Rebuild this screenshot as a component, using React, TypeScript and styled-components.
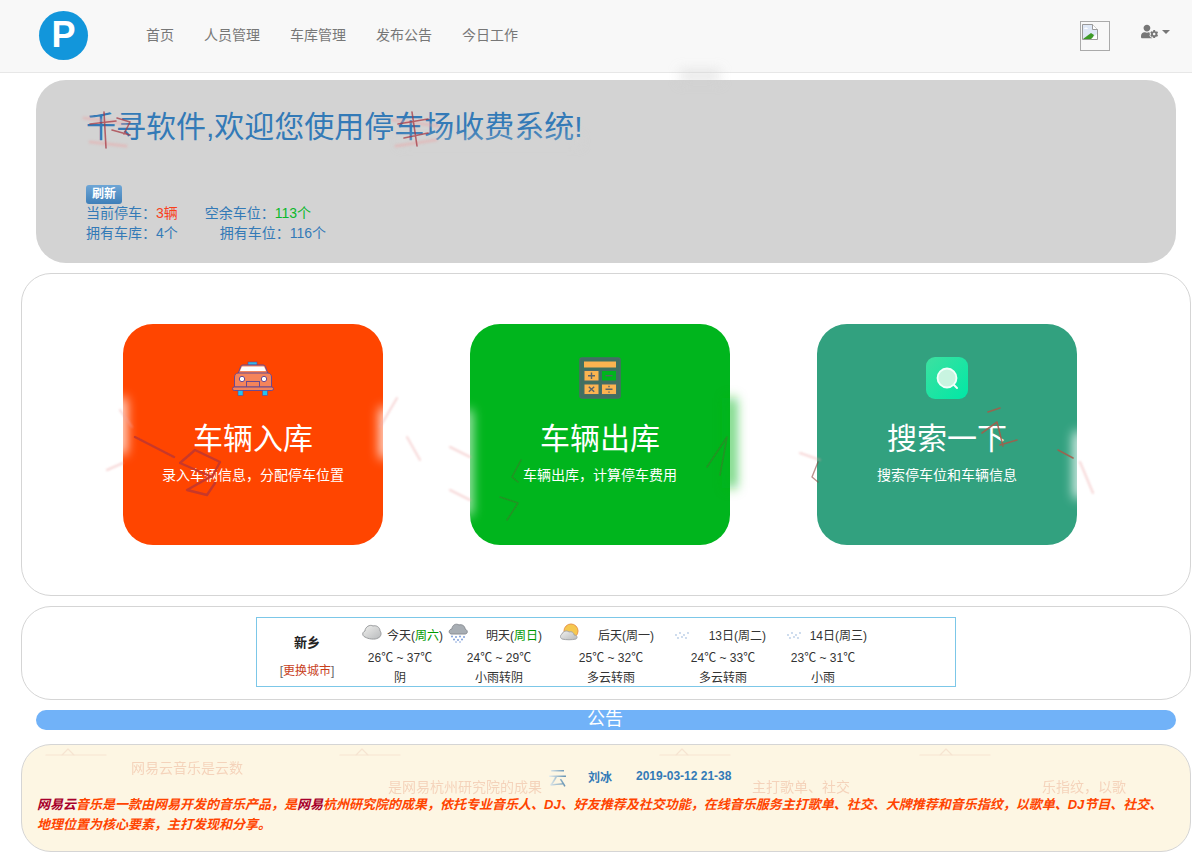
import styled, { createGlobalStyle } from "styled-components";
import { FaUserCog } from "react-icons/fa";

const GlobalStyle = createGlobalStyle`
  * { box-sizing: border-box; }
  html, body { margin: 0; padding: 0; background: #fff; }
  body {
    font-family: "Liberation Sans", "Noto Sans CJK SC", sans-serif;
    font-size: 14px;
    color: #333;
  }
`;

const Page = styled.div`
  position: relative;
  width: 1192px;
  height: 856px;
  overflow: hidden;
`;

const Navbar = styled.nav`
  display: flex;
  align-items: center;
  height: 73px;
  padding-left: 39px;
  background: #f8f8f8;
  border-bottom: 1px solid #e7e7e7;
`;

const Logo = styled.div`
  display: flex;
  align-items: center;
  justify-content: center;
  width: 49px;
  height: 49px;
  margin-top: -2px;
  border-radius: 50%;
  background: #1296db;
  color: #fff;
  font-size: 36px;
  font-weight: 700;
`;

const Menu = styled.div`
  display: flex;
  gap: 30px;
  margin-left: 58px;
  margin-top: -3px;
`;

const MenuLink = styled.a`
  color: #777;
  font-size: 14px;
  line-height: 20px;
`;

const NavRight = styled.div`
  display: flex;
  align-items: flex-start;
  margin-left: auto;
  padding-right: 22px;
`;

const BrokenImage = styled.div`
  width: 30px;
  height: 30px;
  padding: 2px 1px;
  border: 1px solid #aaa;
`;

const UserMenu = styled.div`
  display: flex;
  align-items: flex-start;
  margin-left: 31px;
  margin-top: 2px;
  color: #777;
  font-size: 17px;
`;

const Caret = styled.span`
  margin: 7px 0 0 4px;
  border-top: 4px solid #777;
  border-left: 4px solid transparent;
  border-right: 4px solid transparent;
`;

const Jumbotron = styled.section`
  height: 183px;
  margin: 7px 16px 0 36px;
  padding: 30px 50px 0;
  border-radius: 30px;
  background: #d3d3d3;
  color: #337ab7;
`;

const Title = styled.h1`
  margin: 0 0 42px;
  font-size: 30px;
  font-weight: 400;
  line-height: 33px;
  white-space: nowrap;
`;

const Badge = styled.span`
  display: block;
  width: 36px;
  height: 19px;
  margin-bottom: -1px;
  border-radius: 3px;
  background: linear-gradient(#6ea6d6, #3f7fb8);
  color: #fff;
  font-size: 12px;
  font-weight: 700;
  line-height: 19px;
  text-align: center;
`;

const StatRow = styled.div`
  display: flex;
  height: 20px;
  line-height: 20px;
`;

const Stat = styled.span<{ $offset?: number }>`
  margin-left: ${(p) => p.$offset ?? 0}px;
`;

const Value = styled.span<{ $color?: string }>`
  color: ${(p) => p.$color ?? "inherit"};
`;

const Panel = styled.section<{ $height: number; $top?: number; $bg?: string }>`
  position: relative;
  height: ${(p) => p.$height}px;
  margin: ${(p) => p.$top ?? 10}px 1px 0 21px;
  border: 1px solid #d5d5d5;
  border-radius: 30px;
  background: ${(p) => p.$bg ?? "#fff"};
`;

const CardGrid = styled.div`
  display: grid;
  grid-template-columns: repeat(3, 347px);
  padding: 50px 0 0 101px;
`;

const ActionCard = styled.a<{ $bg: string }>`
  display: flex;
  flex-direction: column;
  align-items: center;
  width: 260px;
  height: 221px;
  padding-top: 33px;
  border-radius: 30px;
  background: ${(p) => p.$bg};
  color: #fff;
`;

const CardIcon = styled.div`
  width: 42px;
  height: 42px;
`;

const CardTitle = styled.div`
  margin-top: 20px;
  font-size: 30px;
  line-height: 40px;
`;

const CardText = styled.div`
  margin-top: 6px;
  font-size: 14px;
  line-height: 20px;
`;

const WeatherBox = styled.div`
  display: grid;
  grid-template-columns: 100px 86px 112px 112px 112px 88px;
  width: 700px;
  height: 70px;
  margin: 10px 0 0 234px;
  border: 1px solid #7cc7e8;
  font-size: 12px;
  color: #333;
  white-space: nowrap;
`;

const CityCell = styled.div`
  display: flex;
  flex-direction: column;
  align-items: center;
  padding-top: 15px;
`;

const CityName = styled.strong`
  font-size: 13px;
  line-height: 20px;
  color: #222;
`;

const CityLink = styled.span`
  margin-top: 8px;
  line-height: 20px;
  color: #666;
`;

const CityLinkText = styled.span`
  color: #c8401c;
`;

const DayCell = styled.div`
  display: flex;
  flex-direction: column;
  align-items: center;
  padding-top: 6px;
`;

const DayHead = styled.div<{ $wide?: boolean }>`
  display: flex;
  justify-content: space-between;
  align-items: flex-start;
  align-self: stretch;
  height: 24px;
  padding: 0 ${(p) => (p.$wide ? 13 : 0)}px 0 5px;
  line-height: 24px;
`;

const WeatherIcon = styled.svg`
  width: 20px;
  height: 20px;
  margin-top: -1px;
`;

const Weekday = styled.span`
  color: #090;
`;

const DayLine = styled.div`
  height: 20px;
  line-height: 20px;
`;

const NoticeBar = styled.div`
  height: 20px;
  margin: 10px 16px 0 36px;
  padding-right: 2px;
  border-radius: 10px;
  background: #71b2f8;
  color: #fff;
  font-size: 18px;
  line-height: 18px;
  text-align: center;
`;

const NoticeHead = styled.div`
  display: flex;
  align-items: center;
  height: 20px;
  margin: 21px 0 0 526px;
  color: #337ab7;
  font-size: 12px;
  font-weight: 700;
`;

const NoticeGhostTitle = styled.span`
  width: 40px;
  font-size: 19px;
  font-weight: 400;
  background: linear-gradient(90deg, #eef2f0, #5f8fb0 45%);
  -webkit-background-clip: text;
  background-clip: text;
  color: transparent;
`;

const NoticeDate = styled.span`
  margin-left: 24px;
`;

const NoticeBody = styled.p`
  margin: 9px 0 0 15px;
  color: #f40;
  font-size: 13px;
  font-style: italic;
  font-weight: 700;
  line-height: 20px;
  white-space: nowrap;
`;

const BodyMark = styled.span`
  color: #a8002c;
`;

const GhostText = styled.span<{ $x: number; $y: number }>`
  position: absolute;
  left: ${(p) => p.$x}px;
  top: ${(p) => p.$y}px;
  color: #e9a080;
  opacity: 0.4;
  font-size: 14px;
  line-height: 16px;
  white-space: nowrap;
`;

const Smears = styled.svg`
  position: absolute;
  left: 0;
  top: 0;
  pointer-events: none;
`;

const days = [
  { label: "今天", week: "周六", temp: "26℃ ~ 37℃", text: "阴", kind: "cloud" },
  { label: "明天", week: "周日", temp: "24℃ ~ 29℃", text: "小雨转阴", kind: "rain", wide: true },
  { label: "后天", week: "周一", temp: "25℃ ~ 32℃", text: "多云转雨", kind: "sun", wide: true, plain: true },
  { label: "13日", week: "周二", temp: "24℃ ~ 33℃", text: "多云转雨", kind: "snow", wide: true, plain: true },
  { label: "14日", week: "周三", temp: "23℃ ~ 31℃", text: "小雨", kind: "snow", plain: true },
];

function WeatherGlyph({ kind }: { kind: string }) {
  return (
    <WeatherIcon viewBox="0 0 20 20">
      <defs>
        <linearGradient id="cloudFill" x1="0" y1="0" x2="1" y2="1">
          <stop offset="0" stopColor="#f0f0ee" />
          <stop offset="1" stopColor="#b8babc" />
        </linearGradient>
      </defs>
      {kind === "sun" && <circle cx="11" cy="8" r="7" fill="#f5c850" stroke="#e8964a" />}
      {kind === "cloud" && (
        <path d="M3 14C0 13 0 9 3 8 3 4 8 1 11 3c3-1 7 1 7 5 2 2 1 6-2 7-3 2-10 1-13-1z" fill="url(#cloudFill)" stroke="#9a9c9e" />
      )}
      {kind === "rain" && (
        <>
          <path d="M3 11C0 10 1 6 4 6 4 2 8 0 11 2c3-1 6 1 6 4 3 1 3 5 0 5z" fill="#a8aeb4" stroke="#8a8e94" />
          <g fill="#7f9fd8">
            <circle cx="4" cy="13.500" r="1" />
            <circle cx="8" cy="14" r="1" />
            <circle cx="12" cy="13.500" r="1" />
            <circle cx="16" cy="14" r="1" />
            <circle cx="6" cy="16.500" r="1" />
            <circle cx="10" cy="17" r="1" />
            <circle cx="14" cy="16.500" r="1" />
            <circle cx="8" cy="19" r="0.800" />
            <circle cx="12" cy="19" r="0.800" />
          </g>
        </>
      )}
      {kind === "sun" && (
        <path d="M2 16c-2-1-2-4 0-5 1-3 5-4 7-2 3-1 5 1 5 3 3 0 4 3 2 4-4 1-10 1-14 0z" fill="url(#cloudFill)" stroke="#a4a6a8" />
      )}
      {kind === "snow" && (
        <g fill="#b8cce6">
          <circle cx="4" cy="12" r="0.900" />
          <circle cx="8" cy="10" r="0.900" />
          <circle cx="12" cy="12" r="0.900" />
          <circle cx="16" cy="10" r="0.900" />
          <circle cx="6" cy="15" r="0.900" />
          <circle cx="10" cy="14" r="0.900" />
          <circle cx="14" cy="15" r="0.900" />
        </g>
      )}
    </WeatherIcon>
  );
}

function TaxiIcon() {
  return (
    <svg width="42" height="42" viewBox="0 0 42 42">
      <rect x="16" y="5" width="9" height="3" fill="#35b8e8" stroke="#5a4a9a" strokeWidth="0.600" />
      <path d="M6 17l2.500-7c.3-1 1-2 2.500-2h20c1.500 0 2.200 1 2.500 2l2.500 7z" fill="#f5845a" stroke="#6a4a90" />
      <path d="M8 14l1.500-3.500c.3-.7.7-1 1.500-1h20c.8 0 1.200.3 1.500 1L34 14z" fill="#fff" />
      <path d="M2.500 20c0-2 1.500-4 3.500-4h30c2 0 3.500 2 3.500 4v10h-37z" fill="#f5845a" stroke="#6a4a90" />
      <circle cx="10" cy="22" r="2.700" fill="#fff" stroke="#6a4a90" />
      <circle cx="32" cy="22" r="2.700" fill="#fff" stroke="#6a4a90" />
      <rect x="14.500" y="24.500" width="13" height="5.500" fill="#f5845a" stroke="#6a4a90" />
      <rect x="0.500" y="30" width="41" height="3.500" rx="1.700" fill="#f5845a" stroke="#6a4a90" />
      <rect x="6" y="33.500" width="5" height="5" fill="#22c4f0" stroke="#5a4a9a" strokeWidth="0.600" />
      <rect x="30.500" y="33.500" width="5" height="5" fill="#22c4f0" stroke="#5a4a9a" strokeWidth="0.600" />
    </svg>
  );
}

function CalculatorIcon() {
  return (
    <svg width="42" height="42" viewBox="0 0 42 42">
      <rect x="1" y="1" width="40" height="40" rx="2" fill="#3f7060" stroke="#4a6a68" strokeWidth="1.500" />
      <rect x="5" y="4.500" width="32" height="6" fill="#fbb450" />
      <rect x="5" y="13.500" width="15" height="10.500" fill="#fbb450" stroke="#4d6a68" />
      <rect x="22.500" y="13.500" width="15" height="10.500" fill="#00b51d" stroke="#3f7060" />
      <rect x="5" y="27" width="15" height="10.500" fill="#fbb450" stroke="#4d6a68" />
      <rect x="22.500" y="27" width="15" height="10.500" fill="#fbb450" stroke="#4d6a68" />
      <g stroke="#5a6468" strokeWidth="1.400">
        <path d="M9 18.700h7M12.500 15.500v6.500" />
        <path d="M26.500 18.700h7" />
        <path d="M9.800 29.800l5.400 5M15.200 29.800l-5.400 5" />
        <path d="M26.500 32.300h7M30 28.800v1.400M30 34.400v1.400" />
      </g>
    </svg>
  );
}

function SearchIcon() {
  return (
    <svg width="42" height="42" viewBox="0 0 42 42">
      <defs>
        <linearGradient id="searchBg" x1="0" y1="0" x2="1" y2="1">
          <stop offset="0" stopColor="#3ee0a0" />
          <stop offset="1" stopColor="#00e8a6" />
        </linearGradient>
      </defs>
      <rect width="42" height="42" rx="9" fill="url(#searchBg)" />
      <circle cx="21" cy="21" r="9.500" fill="#c8f4e0" stroke="#f2fffa" strokeWidth="1.800" />
      <path d="M28 28l3 3" stroke="#f2fffa" strokeWidth="2" strokeLinecap="round" />
    </svg>
  );
}

function BrokenImageIcon() {
  return (
    <svg width="16" height="16" viewBox="0 0 16 16">
      <path d="M.5.500h10l5 5v10H.5z" fill="#dfe8f6" stroke="#9a9a9a" />
      <path d="M10.500.500v5h5" fill="#fff" stroke="#9a9a9a" />
      <path d="M2 5c1-2 3-2 4 0h-4z" fill="#fff" />
      <path d="M1 15l8-6 3 2-2 4z" fill="#3c9a28" />
      <path d="M9 15l6-5v5z" fill="#fff" />
    </svg>
  );
}

// ghost strokes left on the page by the mouse effect
function PageSmears() {
  return (
    <Smears width="1192" height="856" viewBox="0 0 1192 856">
      <defs>
        <filter id="soft" x="-200%" y="-50%" width="500%" height="200%">
          <feGaussianBlur stdDeviation="6" />
        </filter>
        <filter id="slight" x="-20%" y="-20%" width="140%" height="140%">
          <feGaussianBlur stdDeviation="0.500" />
        </filter>
        <filter id="hazy" x="-20%" y="-20%" width="140%" height="140%">
          <feGaussianBlur stdDeviation="1.200" />
        </filter>
      </defs>

      <g filter="url(#soft)">
        <rect x="116" y="398" width="10" height="56" fill="#fff" />
        <rect x="380" y="408" width="10" height="50" fill="#fff" />
        <rect x="462" y="410" width="10" height="105" fill="#fff" opacity="0.800" />
        <rect x="726" y="398" width="10" height="90" fill="#00b51d" opacity="0.700" />
        <rect x="1074" y="432" width="10" height="66" fill="#fff" />
        <rect x="400" y="138" width="180" height="6" fill="#d3d3d3" opacity="0.600" />
        <rect x="680" y="70" width="40" height="12" fill="#cfcfcf" opacity="0.500" />
      </g>

      <g fill="none" filter="url(#hazy)" strokeLinecap="round" stroke="#eda4a4" opacity="0.450">
        <path d="M84 118l42 6M90 142l36 4M392 120l46 6M396 146l40-6" strokeWidth="3" />
        <path d="M120 410l12 17M107 470l16-7M397 398l-17 29M407 437l13 23M450 447l20 10M450 490l20 10" strokeWidth="2" />
        <path d="M800 453l20 7M1080 462l13 31" strokeWidth="2" />
      </g>

      <g fill="none" filter="url(#slight)" strokeLinecap="round" strokeLinejoin="round">
        <g stroke="#a83a44" strokeWidth="1.600" opacity="0.750">
          <path d="M90 124l26-3M104 112l2 36M117 118l13 4-6 12M112 130l18 5" />
          <path d="M398 124l30-5M412 112l5 34M404 138l24-5" />
        </g>

        <g stroke="#c8392a" strokeWidth="2.400">
          <path d="M135 437l39 20" />
          <path d="M195 450l25 12-8 15-32-14zM210 477l-23 13 20 5 8-12" />
        </g>

        <g stroke="#2c8a26" strokeWidth="1.600" opacity="0.750">
          <path d="M521 460l-9 17 6 5M500 497l18 6-11 17M707 467l20-30-7 38" />
        </g>

        <g stroke="#a85a48" strokeWidth="1.600" opacity="0.850">
          <path d="M988 412l12-4M982 433l15-11M997 422l6 24M1000 445l17-5M1058 450l15 8" />
        </g>

        <g stroke="#8a4a40" strokeWidth="1.400" opacity="0.600">
          <path d="M818 462l-6 15 6 5" />
        </g>

        <g stroke="#e8b8a8" strokeWidth="1.200" opacity="0.300">
          <path d="M46 755h60M62 755l6-6 6 6M340 755h60M356 755l6-6 6 6M660 755h70M676 755l6-6 6 6M920 755h70M940 755l6-6 6 6" />
        </g>
      </g>
    </Smears>
  );
}

export default function App() {
  return (
    <Page>
      <GlobalStyle />
      <Navbar>
        <Logo>P</Logo>
        <Menu>
          <MenuLink>首页</MenuLink>
          <MenuLink>人员管理</MenuLink>
          <MenuLink>车库管理</MenuLink>
          <MenuLink>发布公告</MenuLink>
          <MenuLink>今日工作</MenuLink>
        </Menu>
        <NavRight>
          <BrokenImage>
            <BrokenImageIcon />
          </BrokenImage>
          <UserMenu>
            <FaUserCog />
            <Caret />
          </UserMenu>
        </NavRight>
      </Navbar>

      <Jumbotron>
        <Title>千寻软件,欢迎您使用停车场收费系统!</Title>
        <Badge>刷新</Badge>
        <StatRow>
          <Stat>
            当前停车：<Value $color="#f8401c">3辆</Value>
          </Stat>
          <Stat $offset={27}>
            空余车位：<Value $color="#0cb82c">113个</Value>
          </Stat>
        </StatRow>
        <StatRow>
          <Stat>拥有车库：4个</Stat>
          <Stat $offset={42}>拥有车位：116个</Stat>
        </StatRow>
      </Jumbotron>

      <Panel $height={323}>
        <CardGrid>
          <ActionCard $bg="#ff4500">
            <CardIcon>
              <TaxiIcon />
            </CardIcon>
            <CardTitle>车辆入库</CardTitle>
            <CardText>录入车辆信息，分配停车位置</CardText>
          </ActionCard>
          <ActionCard $bg="#00b51d">
            <CardIcon>
              <CalculatorIcon />
            </CardIcon>
            <CardTitle>车辆出库</CardTitle>
            <CardText>车辆出库，计算停车费用</CardText>
          </ActionCard>
          <ActionCard $bg="#32a17f">
            <CardIcon>
              <SearchIcon />
            </CardIcon>
            <CardTitle>搜索一下</CardTitle>
            <CardText>搜索停车位和车辆信息</CardText>
          </ActionCard>
        </CardGrid>
      </Panel>

      <Panel $height={94}>
        <WeatherBox>
          <CityCell>
            <CityName>新乡</CityName>
            <CityLink>
              [<CityLinkText>更换城市</CityLinkText>]
            </CityLink>
          </CityCell>
          {days.map((day) => (
            <DayCell key={day.label}>
              <DayHead $wide={day.wide}>
                <WeatherGlyph kind={day.kind} />
                <span>
                  {day.label}(
                  {day.plain ? day.week : <Weekday>{day.week}</Weekday>})
                </span>
              </DayHead>
              <DayLine>{day.temp}</DayLine>
              <DayLine>{day.text}</DayLine>
            </DayCell>
          ))}
        </WeatherBox>
      </Panel>

      <NoticeBar>公告</NoticeBar>

      <Panel $height={108} $top={14} $bg="#fdf6e3">
        <GhostText $x={109} $y={15}>网易云音乐是云数</GhostText>
        <GhostText $x={366} $y={34}>是网易杭州研究院的成果</GhostText>
        <GhostText $x={730} $y={34}>主打歌单、社交</GhostText>
        <GhostText $x={1020} $y={34}>乐指纹，以歌</GhostText>
        <NoticeHead>
          <NoticeGhostTitle>云</NoticeGhostTitle>
          刘冰
          <NoticeDate>2019-03-12 21-38</NoticeDate>
        </NoticeHead>
        <NoticeBody>
          <BodyMark>网易云</BodyMark>音乐是一款由网易开发的音乐产品，是<BodyMark>网易</BodyMark>杭州研究院的成果，依托专业音乐人、DJ、好友推荐及社交功能，在线音乐服务主打歌单、社交、大牌推荐和音乐指纹，以歌单、DJ节目、社交、
          <br />
          地理位置为核心要素，主打发现和分享。
        </NoticeBody>
      </Panel>

      <PageSmears />
    </Page>
  );
}
